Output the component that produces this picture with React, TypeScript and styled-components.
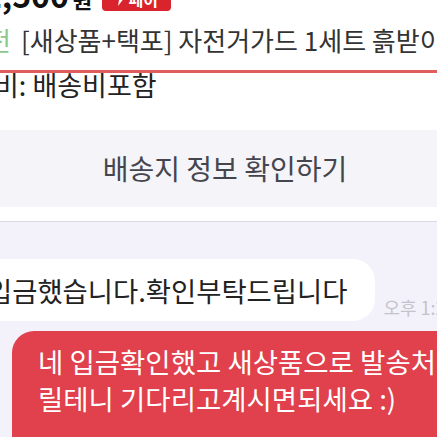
import React from 'react';
import styled, { createGlobalStyle } from 'styled-components';

const GlobalStyle = createGlobalStyle`
    html, body {
        margin: 0;
        padding: 0;
        background: #ffffff;
        overflow: hidden;
    }
    body {
        font-family: "Noto Sans CJK KR", "Noto Sans", sans-serif;
    }
`;

const Screen = styled.div`
    width: 437px;
    height: 437px;
    overflow: hidden;
    display: flex;
    flex-direction: column;
    background: #ffffff;
`;

const ProductInfo = styled.section`
    display: flex;
    flex-direction: column;
`;

const PriceRow = styled.div`
    display: flex;
    align-items: baseline;
    height: 32px;
    margin-top: -22px;
    margin-left: -36px;
    white-space: nowrap;
`;

const Price = styled.span`
    font-size: 32px;
    line-height: 32px;
    font-weight: 700;
    color: #111111;
`;

const Won = styled.span`
    font-size: 21px;
    font-weight: 700;
    color: #111111;
    margin-left: 4px;
`;

const PayBadge = styled.span`
    align-self: flex-start;
    display: flex;
    align-items: center;
    justify-content: center;
    gap: 3px;
    margin-top: 9px;
    margin-left: 10px;
    width: 69px;
    height: 24px;
    border-radius: 4px;
    background: #d9232d;
    color: #ffffff;
    font-size: 16px;
    font-weight: 700;
`;

const TitleRow = styled.div`
    display: flex;
    margin-top: 15px;
    margin-left: -13px;
    font-size: 26px;
    line-height: 30px;
    white-space: nowrap;
`;

const Status = styled.span`
    color: #8cc78c;
    margin-right: 10px;
`;

const Title = styled.span`
    color: #333333;
`;

const Divider = styled.div`
    margin-top: 15px;
    height: 3px;
    background: #e05d5d;
`;

const ShippingRow = styled.div`
    margin-left: -6px;
    font-size: 27px;
    line-height: 24px;
    color: #222222;
    white-space: nowrap;
`;

const ShippingButton = styled.button`
    margin-top: 33px;
    height: 80px;
    border: none;
    padding: 0 0 0 13px;
    background: #f4f4f9;
    font-family: inherit;
    font-size: 28px;
    color: #45454d;
`;

const Spacer = styled.div`
    height: 15px;
    border-bottom: 1px solid #d9d9de;
`;

const ChatArea = styled.div`
    flex: 1;
    background: #f3f2fa;
    padding-top: 37px;
    display: flex;
    flex-direction: column;
`;

const MessageRow = styled.div`
    display: flex;
    align-items: flex-end;
    gap: 8px;
`;

const ReceivedBubble = styled.div`
    margin-left: -41px;
    padding: 14px 28px;
    border-radius: 22px;
    background: #ffffff;
    font-size: 27.4px;
    line-height: 34px;
    color: #222222;
    white-space: nowrap;
`;

const Time = styled.span`
    margin-bottom: 5px;
    font-size: 18px;
    line-height: 18px;
    color: #c3c3cb;
    white-space: nowrap;
`;

const SentBubble = styled.div`
    margin-top: 10px;
    margin-left: 12px;
    padding: 12px 0 20px 26px;
    border-radius: 22px 0 0 0;
    background: #e0414c;
    color: #ffffff;
    font-size: 27.5px;
    line-height: 37px;
    white-space: pre;
`;

const Bolt = () => (
    <svg width="10" height="14" viewBox="0 0 10 14">
        <path d="M6 0 L0 8 H4 L3 14 L10 5 H6 Z" fill="#ffffff" />
    </svg>
);

const App = () => {
    return (
        <Screen>
            <GlobalStyle />
            <ProductInfo>
                <PriceRow>
                    <Price>12,500</Price>
                    <Won>원</Won>
                    <PayBadge>
                        <Bolt />
                        페이
                    </PayBadge>
                </PriceRow>
                <TitleRow>
                    <Status>전</Status>
                    <Title>[새상품+택포] 자전거가드 1세트 흙받이 머드가드</Title>
                </TitleRow>
                <Divider />
                <ShippingRow>비: 배송비포함</ShippingRow>
            </ProductInfo>
            <ShippingButton>배송지 정보 확인하기</ShippingButton>
            <Spacer />
            <ChatArea>
                <MessageRow>
                    <ReceivedBubble>입금했습니다.확인부탁드립니다</ReceivedBubble>
                    <Time>오후 1:23</Time>
                </MessageRow>
                <SentBubble>
                    {'네 입금확인했고 새상품으로 발송처리해드\n릴테니 기다리고계시면되세요 :)'}
                </SentBubble>
            </ChatArea>
        </Screen>
    );
};

export default App;
